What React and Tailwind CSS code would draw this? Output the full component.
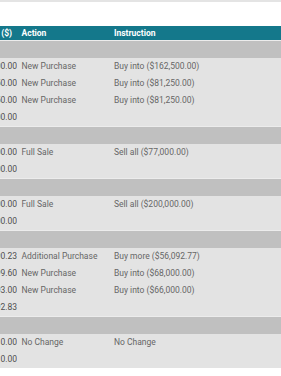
const groups = [
  {
    rows: [
      { amt: "162,500.00", action: "New Purchase", instr: "Buy into ($162,500.00)" },
      { amt: "81,250.00", action: "New Purchase", instr: "Buy into ($81,250.00)" },
      { amt: "81,250.00", action: "New Purchase", instr: "Buy into ($81,250.00)" },
      { amt: "325,000.00", action: "", instr: "" },
    ],
  },
  {
    rows: [
      { amt: "-77,000.00", action: "Full Sale", instr: "Sell all ($77,000.00)" },
      { amt: "-77,000.00", action: "", instr: "" },
    ],
  },
  {
    rows: [
      { amt: "-200,000.00", action: "Full Sale", instr: "Sell all ($200,000.00)" },
      { amt: "-200,000.00", action: "", instr: "" },
    ],
  },
  {
    rows: [
      { amt: "56,090.23", action: "Additional Purchase", instr: "Buy more ($56,092.77)" },
      { amt: "67,999.60", action: "New Purchase", instr: "Buy into ($68,000.00)" },
      { amt: "66,003.00", action: "New Purchase", instr: "Buy into ($66,000.00)" },
      { amt: "190,092.83", action: "", instr: "" },
    ],
  },
  {
    rows: [
      { amt: "0.00", action: "No Change", instr: "No Change" },
      { amt: "0.00", action: "", instr: "" },
    ],
  },
];

function Row({ r }) {
  return (
    <div className="flex h-[17px] items-center bg-[#e3e3e3] text-[8.5px] text-[#666]">
      <div className="flex w-[17px] shrink-0 justify-end overflow-hidden whitespace-nowrap text-[#4f4f4f]">
        {r.amt}
      </div>
      <div className="ml-[4.5px] w-[92.5px] shrink-0 whitespace-nowrap">{r.action}</div>
      <div className="whitespace-nowrap">{r.instr}</div>
    </div>
  );
}

export default function App() {
  return (
    <div className="h-[376px] w-[281px] overflow-hidden bg-white font-['Roboto',sans-serif]">
      <div className="h-[2px] bg-[#e4e4e4]" />
      <div className="h-[24px]" />
      <div className="flex h-[14px] items-center bg-[#14788b] text-[8.5px] font-bold text-white">
        <div className="flex w-[17px] shrink-0 justify-end overflow-hidden whitespace-nowrap pr-[5px]">
          <span className="mr-[4px]">Change</span>($)
        </div>
        <div className="ml-[4.5px] w-[92.5px] shrink-0">Action</div>
        <div>Instruction</div>
      </div>
      {groups.map((g, i) => (
        <div key={i} className="border-t border-[#ececec]">
          <div className="h-[17px] bg-[#c0c0c0]" />
          {g.rows.map((r, j) => (
            <Row key={j} r={r} />
          ))}
        </div>
      ))}
    </div>
  );
}
